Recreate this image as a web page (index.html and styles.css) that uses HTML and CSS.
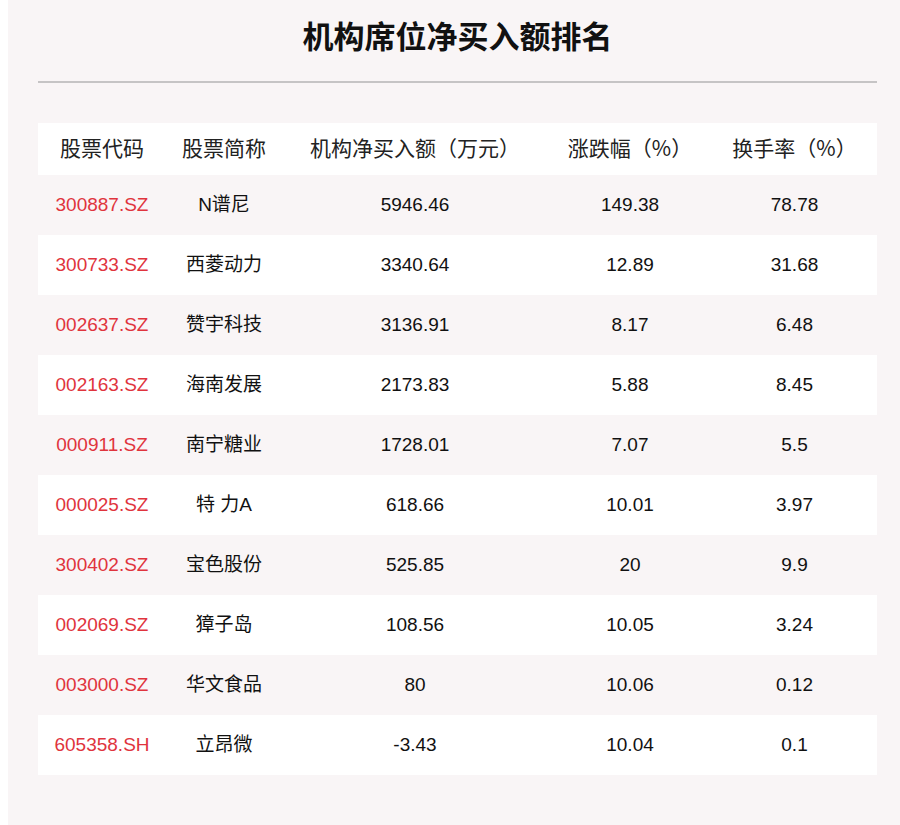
FILE: index.html
```html
<!DOCTYPE html>
<html lang="zh-CN">
<head>
<meta charset="utf-8">
<title>机构席位净买入额排名</title>
<link rel="stylesheet" href="styles.css">
</head>
<body>
<div class="card">
  <h1 class="title">机构席位净买入额排名</h1>
  <div class="rule"></div>
  <table class="rank">
    <thead>
      <tr><th>股票代码</th><th>股票简称</th><th>机构净买入额（万元）</th><th>涨跌幅（%）</th><th>换手率（%）</th></tr>
    </thead>
    <tbody>
      <tr><td class="code">300887.SZ</td><td>N谱尼</td><td>5946.46</td><td>149.38</td><td>78.78</td></tr>
      <tr><td class="code">300733.SZ</td><td>西菱动力</td><td>3340.64</td><td>12.89</td><td>31.68</td></tr>
      <tr><td class="code">002637.SZ</td><td>赞宇科技</td><td>3136.91</td><td>8.17</td><td>6.48</td></tr>
      <tr><td class="code">002163.SZ</td><td>海南发展</td><td>2173.83</td><td>5.88</td><td>8.45</td></tr>
      <tr><td class="code">000911.SZ</td><td>南宁糖业</td><td>1728.01</td><td>7.07</td><td>5.5</td></tr>
      <tr><td class="code">000025.SZ</td><td>特 力A</td><td>618.66</td><td>10.01</td><td>3.97</td></tr>
      <tr><td class="code">300402.SZ</td><td>宝色股份</td><td>525.85</td><td>20</td><td>9.9</td></tr>
      <tr><td class="code">002069.SZ</td><td>獐子岛</td><td>108.56</td><td>10.05</td><td>3.24</td></tr>
      <tr><td class="code">003000.SZ</td><td>华文食品</td><td>80</td><td>10.06</td><td>0.12</td></tr>
      <tr><td class="code">605358.SH</td><td>立昂微</td><td>-3.43</td><td>10.04</td><td>0.1</td></tr>
    </tbody>
  </table>
</div>
</body>
</html>
```
FILE: styles.css
```css
html, body {
  margin: 0;
  padding: 0;
  background: #ffffff;
}
body {
  font-family: "Liberation Sans", "Noto Sans CJK SC", sans-serif;
  color: #111111;
}
.card {
  margin-left: 8px;
  min-height: 825px;
  background: #f9f5f6;
  padding: 0 23px 0 30px;
  box-sizing: border-box;
  overflow: hidden;
}
.title {
  margin: 0;
  height: 70px;
  line-height: 70px;
  text-align: center;
  font-family: "Noto Sans CJK SC", sans-serif;
  font-size: 31px;
  font-weight: 700;
  color: #111111;
}
.rule {
  margin-top: 11px;
  height: 2px;
  background: #c6c4c5;
}
.rank {
  margin-top: 40px;
  width: 839px;
  border-collapse: collapse;
  table-layout: fixed;
}
.rank th:nth-child(1) { width: 128px; }
.rank th:nth-child(2) { width: 116px; }
.rank th:nth-child(3) { width: 266px; }
.rank th:nth-child(4) { width: 164px; }
.rank th:nth-child(5) { width: 165px; }
.rank th {
  height: 52px;
  padding: 0 0 4px 0;
  box-sizing: border-box;
  background: #ffffff;
  font-family: "Noto Sans CJK SC", sans-serif;
  font-weight: 400;
  font-size: 21px;
  line-height: 24px;
  color: #222222;
  text-align: center;
  vertical-align: middle;
}
.rank td {
  height: 60px;
  padding: 0;
  font-size: 19px;
  line-height: 22px;
  text-align: center;
  vertical-align: middle;
  color: #111111;
}
.rank tbody tr:nth-child(even) td {
  background: #ffffff;
}
.rank td.code {
  color: #e0343d;
}
```
